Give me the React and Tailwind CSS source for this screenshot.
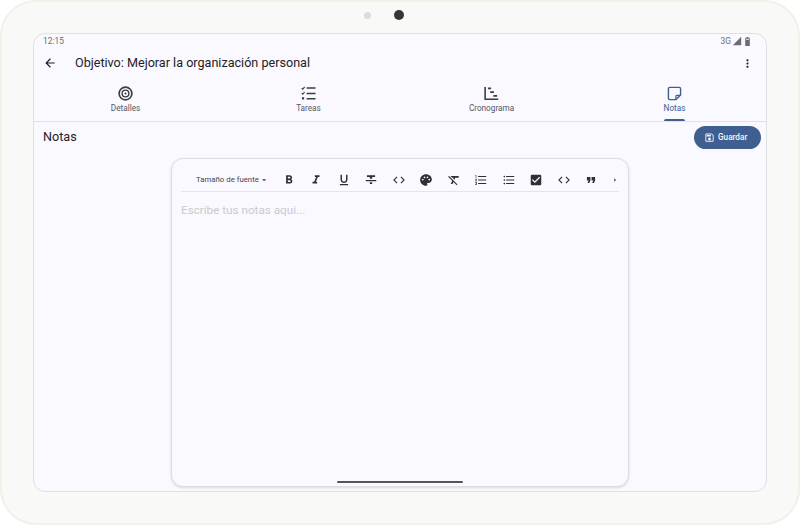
import React from "react";
import {
  MdArrowBack,
  MdMoreVert,
  MdOutlineSave,
  MdFormatBold,
  MdFormatItalic,
  MdFormatUnderlined,
  MdFormatStrikethrough,
  MdCode,
  MdPalette,
  MdFormatClear,
  MdFormatListNumbered,
  MdFormatListBulleted,
  MdCheckBox,
  MdFormatQuote,
  MdArrowRight,
  MdArrowDropDown,
  MdSignalCellular4Bar,
  MdBattery6Bar,
} from "react-icons/md";

const TargetIcon = ({ className }) => (
  <svg viewBox="0 0 16 16" className={className} fill="none" stroke="currentColor">
    <circle cx="8" cy="8" r="6.8" strokeWidth="1.8" />
    <circle cx="8" cy="8" r="3.6" strokeWidth="1.5" />
    <circle cx="8" cy="8" r="1.1" fill="currentColor" stroke="none" />
  </svg>
);

const ChecklistIcon = ({ className }) => (
  <svg viewBox="0 0 16 16" className={className} fill="none" stroke="currentColor">
    <path d="M.8 2.2l1.1 1.1 2-2.3" strokeWidth="1.2" />
    <path d="M.8 7.6l1.1 1.1 2-2.3" strokeWidth="1.2" />
    <path d="M1 12h2.4v2.4h-2.4z" fill="currentColor" stroke="none" />
    <path d="M6 2.2h9.5M6 8h9.5M6 13.6h9.5" strokeWidth="1.7" />
  </svg>
);

const TimelineIcon = ({ className }) => (
  <svg viewBox="0 0 16 16" className={className} fill="none" stroke="currentColor">
    <path d="M1.2 1v13.2h14" strokeWidth="1.7" />
    <path d="M4.2 2.5h3.4M6.6 6.5h4M10 10.5h4" strokeWidth="1.7" />
  </svg>
);

const NoteIcon = ({ className }) => (
  <svg viewBox="0 0 16 16" className={className} fill="none" stroke="currentColor">
    <path
      d="M3 1.5h10a1.5 1.5 0 0 1 1.5 1.5v6.5l-5 5H3A1.5 1.5 0 0 1 1.5 13V3A1.5 1.5 0 0 1 3 1.5z"
      strokeWidth="1.5"
    />
    <path d="M9.5 14.5v-3.5a1 1 0 0 1 1-1h4" strokeWidth="1.3" />
  </svg>
);

const StatusBar = () => (
  <div className="flex h-[15px] items-center justify-between pl-[9px] pr-[13px] text-[8.4px] text-[#6b6d75]">
    <span>12:15</span>
    <div className="flex items-center">
      <span className="mr-px">3G</span>
      <MdSignalCellular4Bar className="h-[10px] w-[10px]" />
      <MdBattery6Bar className="h-[11px] w-[11px]" />
    </div>
  </div>
);

const AppBar = () => (
  <div className="flex h-[30px] items-center pb-[2px] pl-[9px] pr-[12px] text-[#1f2126]">
    <MdArrowBack className="h-[14px] w-[14px]" />
    <h1 className="ml-[18px] flex-1 text-[12.6px]">Objetivo: Mejorar la organización personal</h1>
    <MdMoreVert className="h-[13px] w-[13px]" />
  </div>
);

const tabs = [
  { label: "Detalles", Icon: TargetIcon },
  { label: "Tareas", Icon: ChecklistIcon },
  { label: "Cronograma", Icon: TimelineIcon },
  { label: "Notas", Icon: NoteIcon, active: true },
];

const Tabs = () => (
  <div className="grid h-[43px] grid-cols-4 border-b border-[#e1e2e8]">
    {tabs.map(({ label, Icon, active }) => (
      <div
        key={label}
        className={
          active
            ? "flex flex-col items-center pt-[7px] text-[#3f5f90]"
            : "flex flex-col items-center pt-[7px] text-[#3b3d44]"
        }
      >
        <Icon className="h-[15px] w-[15px]" />
        <div className="relative flex h-[20px] flex-col items-center">
          <span className={active ? "text-[8.2px] leading-[14px]" : "text-[8.2px] leading-[14px] text-[#55585f]"}>
            {label}
          </span>
          {active && <span className="absolute bottom-0 h-[2px] w-full rounded-t bg-[#3f5f90]" />}
        </div>
      </div>
    ))}
  </div>
);

const toolbarIcons = [
  MdFormatBold,
  MdFormatItalic,
  MdFormatUnderlined,
  MdFormatStrikethrough,
  MdCode,
  MdPalette,
  MdFormatClear,
  MdFormatListNumbered,
  MdFormatListBulleted,
  MdCheckBox,
  MdCode,
  MdFormatQuote,
];

const Editor = () => (
  <div className="mx-auto h-[329px] w-[458px] rounded-[12px] border border-[#dcdde3] bg-[#f9f9ff] px-[9px] pt-[9px] shadow-sm">
    <div className="flex h-[24px] items-center border-b border-[#e4e4ea] pl-[15px] text-[#2e3036]">
      <span className="whitespace-nowrap text-[7.8px] text-[#44474e]">Tamaño de fuente</span>
      <MdArrowDropDown className="h-[18px] w-[18px] text-[#44474e]" />
      <div className="ml-[6px] flex">
        {toolbarIcons.map((Icon, i) => (
          <div key={i} className="flex w-[27.5px] justify-center">
            <Icon className="h-[14px] w-[14px]" />
          </div>
        ))}
      </div>
      <MdArrowRight className="ml-[6px] h-[14px] w-[14px]" />
    </div>
    <p className="pt-[10px] text-[11.7px] text-[#c9c9cf]">Escribe tus notas aquí...</p>
  </div>
);

export default function App() {
  return (
    <div className="h-[525px] w-[800px] bg-white font-['Roboto',sans-serif]">
      <div className="relative h-full w-full rounded-[36px] border-2 border-[#f3f0e6] bg-[#f9f9f7] px-[31px] pt-[31px]">
        <div className="absolute left-[362px] top-[10px] h-[7px] w-[7px] rounded-full bg-[#dcdcdc]" />
        <div className="absolute left-[392px] top-[8px] h-[10px] w-[10px] rounded-full bg-[#34353a]" />
        <div className="relative flex h-[459px] flex-col rounded-[12px] border border-[#dfe0e4] bg-[#f9f9ff]">
          <StatusBar />
          <AppBar />
          <Tabs />
          <div className="flex h-[36px] items-start justify-between pl-[9px] pr-[5px] pt-[4px]">
            <h2 className="pt-[2px] text-[12.6px] text-[#1f2126]">Notas</h2>
            <button className="flex h-[23px] w-[67px] items-center gap-[3px] rounded-full bg-[#3f5f90] pl-[10px] text-[8.2px] font-medium text-[#f3f5fb]">
              <MdOutlineSave className="h-[11px] w-[11px]" />
              Guardar
            </button>
          </div>
          <Editor />
          <div className="absolute bottom-[8px] left-[303px] h-[2px] w-[126px] rounded-full bg-[#55565c]" />
        </div>
      </div>
    </div>
  );
}
